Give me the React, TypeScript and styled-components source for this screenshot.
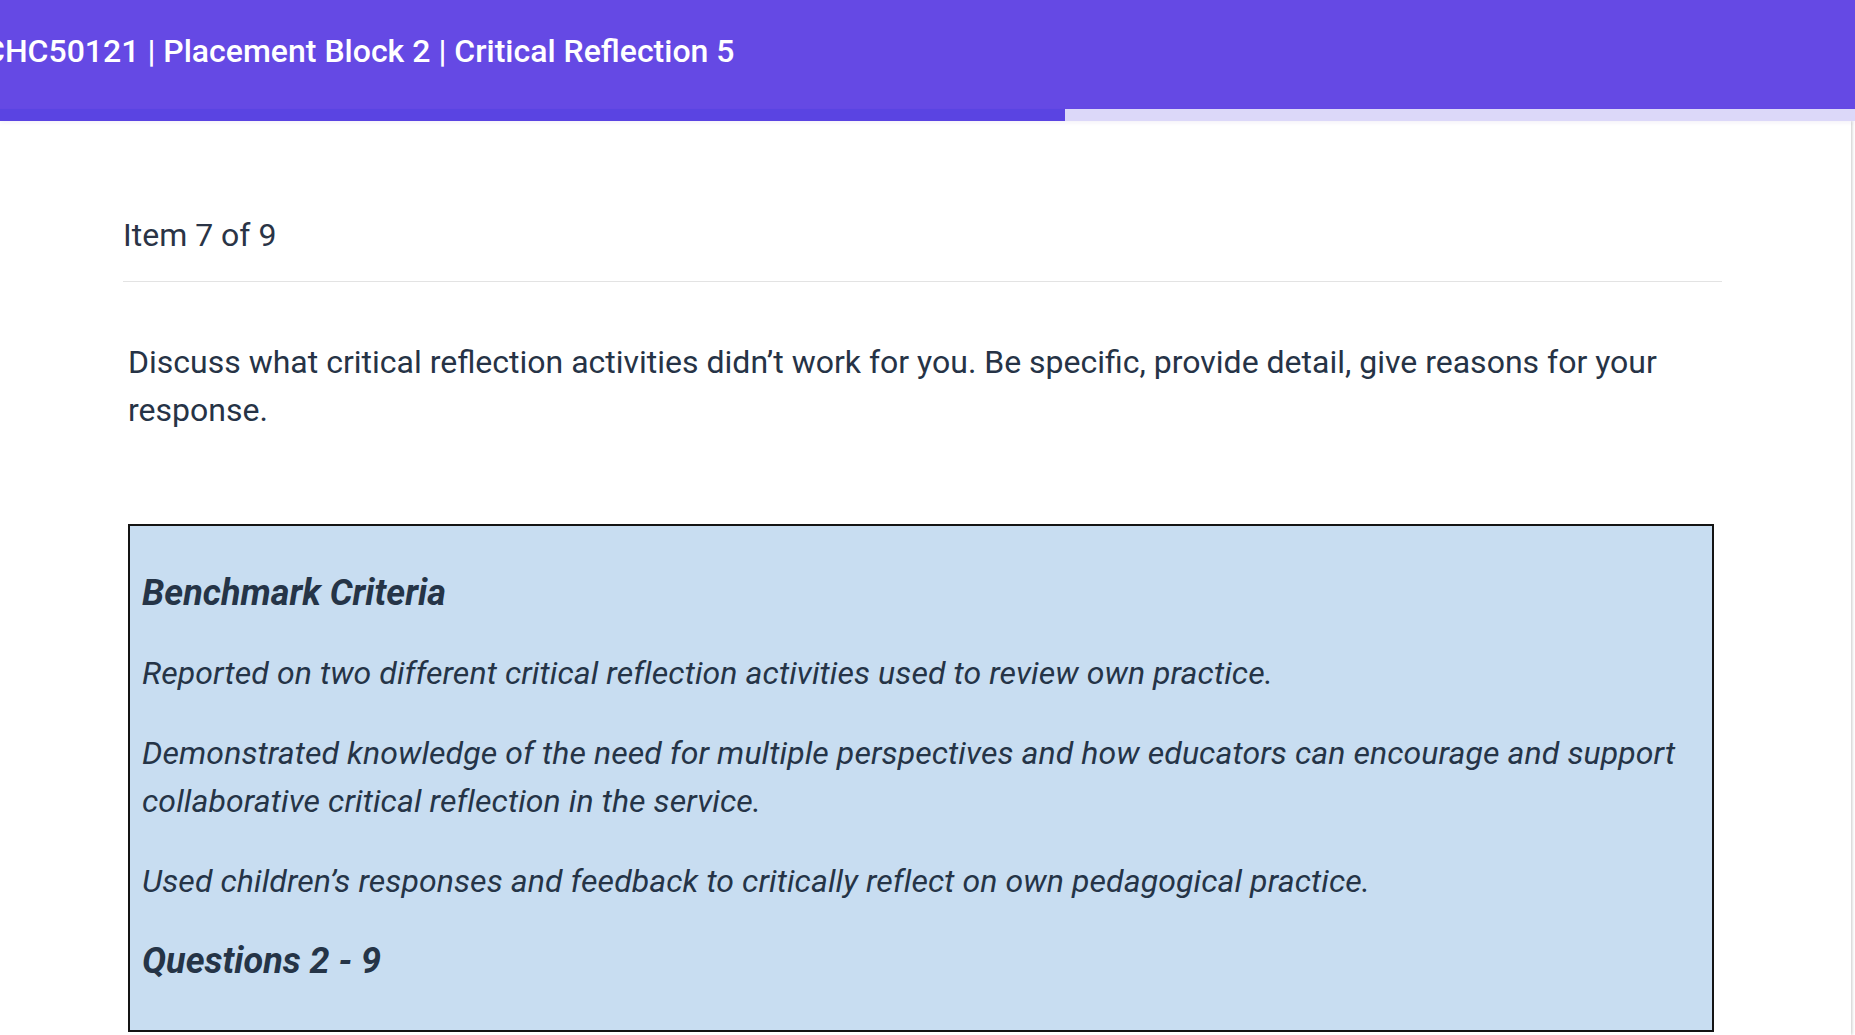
import React from "react";
import styled, { createGlobalStyle } from "styled-components";

const Global = createGlobalStyle`
  html, body {
    margin: 0;
    padding: 0;
    background: #ffffff;
    overflow: hidden;
  }
  body {
    font-family: Roboto, "Noto Sans", "Liberation Sans", sans-serif;
    color: #263346;
  }
`;

const Page = styled.div`
  width: 1855px;
  height: 1035px;
  overflow: hidden;
  display: flex;
  flex-direction: column;
`;

const Header = styled.header`
  height: 109px;
  flex: none;
  box-sizing: border-box;
  padding-bottom: 8px;
  background: #6549e4;
  display: flex;
  align-items: center;
  overflow: hidden;
`;

const Title = styled.h1`
  margin: 0 0 0 -16px;
  font-size: 32px;
  font-weight: 500;
  color: #ffffff;
  white-space: nowrap;
`;

const Progress = styled.div`
  height: 12px;
  flex: none;
  background: #dcd8f9;
  display: flex;
  position: relative;
  z-index: 1;
  box-shadow: 0 2px 4px rgba(60, 40, 160, 0.06);
`;

const ProgressFill = styled.div`
  height: 100%;
  background: #5a44e2;
`;

const Card = styled.main`
  width: 1851px;
  flex: 1;
  background: #ffffff;
  box-shadow: 1px 0 3px rgba(0, 0, 0, 0.22);
  padding: 90px 0 0 123px;
  box-sizing: border-box;
`;

const Content = styled.section`
  width: 1599px;
`;

const ItemLabel = styled.div`
  font-size: 32px;
  line-height: 48px;
  padding-bottom: 22px;
  border-bottom: 1px solid #e3e3e3;
  color: #2a3446;
`;

const Body = styled.div`
  padding: 0 8px 0 5px;
`;

const Question = styled.p`
  margin: 56px 0 90px;
  font-size: 32px;
  line-height: 48px;
  color: #263346;
`;

const CriteriaBox = styled.div`
  background: #c8ddf1;
  border: 2px solid #141414;
  padding: 11px 12px 13px;
`;

const CriteriaText = styled.p<{ $heading?: boolean }>`
  margin: 32px 0;
  font-size: ${(p) => (p.$heading ? "36px" : "32px")};
  line-height: 48px;
  font-style: italic;
  font-weight: ${(p) => (p.$heading ? 700 : 400)};
  letter-spacing: ${(p) => (p.$heading ? "0" : "0.1px")};
  color: #253447;
`;

const criteria = [
  "Reported on two different critical reflection activities used to review own practice.",
  "Demonstrated knowledge of the need for multiple perspectives and how educators can encourage and support collaborative critical reflection in the service.",
  "Used children\u2019s responses and feedback to critically reflect on own pedagogical practice.",
];

export default function App() {
  const progress = 1065 / 1855;
  return (
    <Page>
      <Global />
      <Header>
        <Title>CHC50121 | Placement Block 2 | Critical Reflection 5</Title>
      </Header>
      <Progress>
        <ProgressFill style={{ width: `${progress * 100}%` }} />
      </Progress>
      <Card>
        <Content>
          <ItemLabel>Item 7 of 9</ItemLabel>
          <Body>
            <Question>
              Discuss what critical reflection activities didn’t work for you. Be specific, provide detail, give
              reasons for your response.
            </Question>
            <CriteriaBox>
              <CriteriaText $heading>Benchmark Criteria</CriteriaText>
              {criteria.map((c) => (
                <CriteriaText key={c}>{c}</CriteriaText>
              ))}
              <CriteriaText $heading>Questions 2 - 9</CriteriaText>
            </CriteriaBox>
          </Body>
        </Content>
      </Card>
    </Page>
  );
}
